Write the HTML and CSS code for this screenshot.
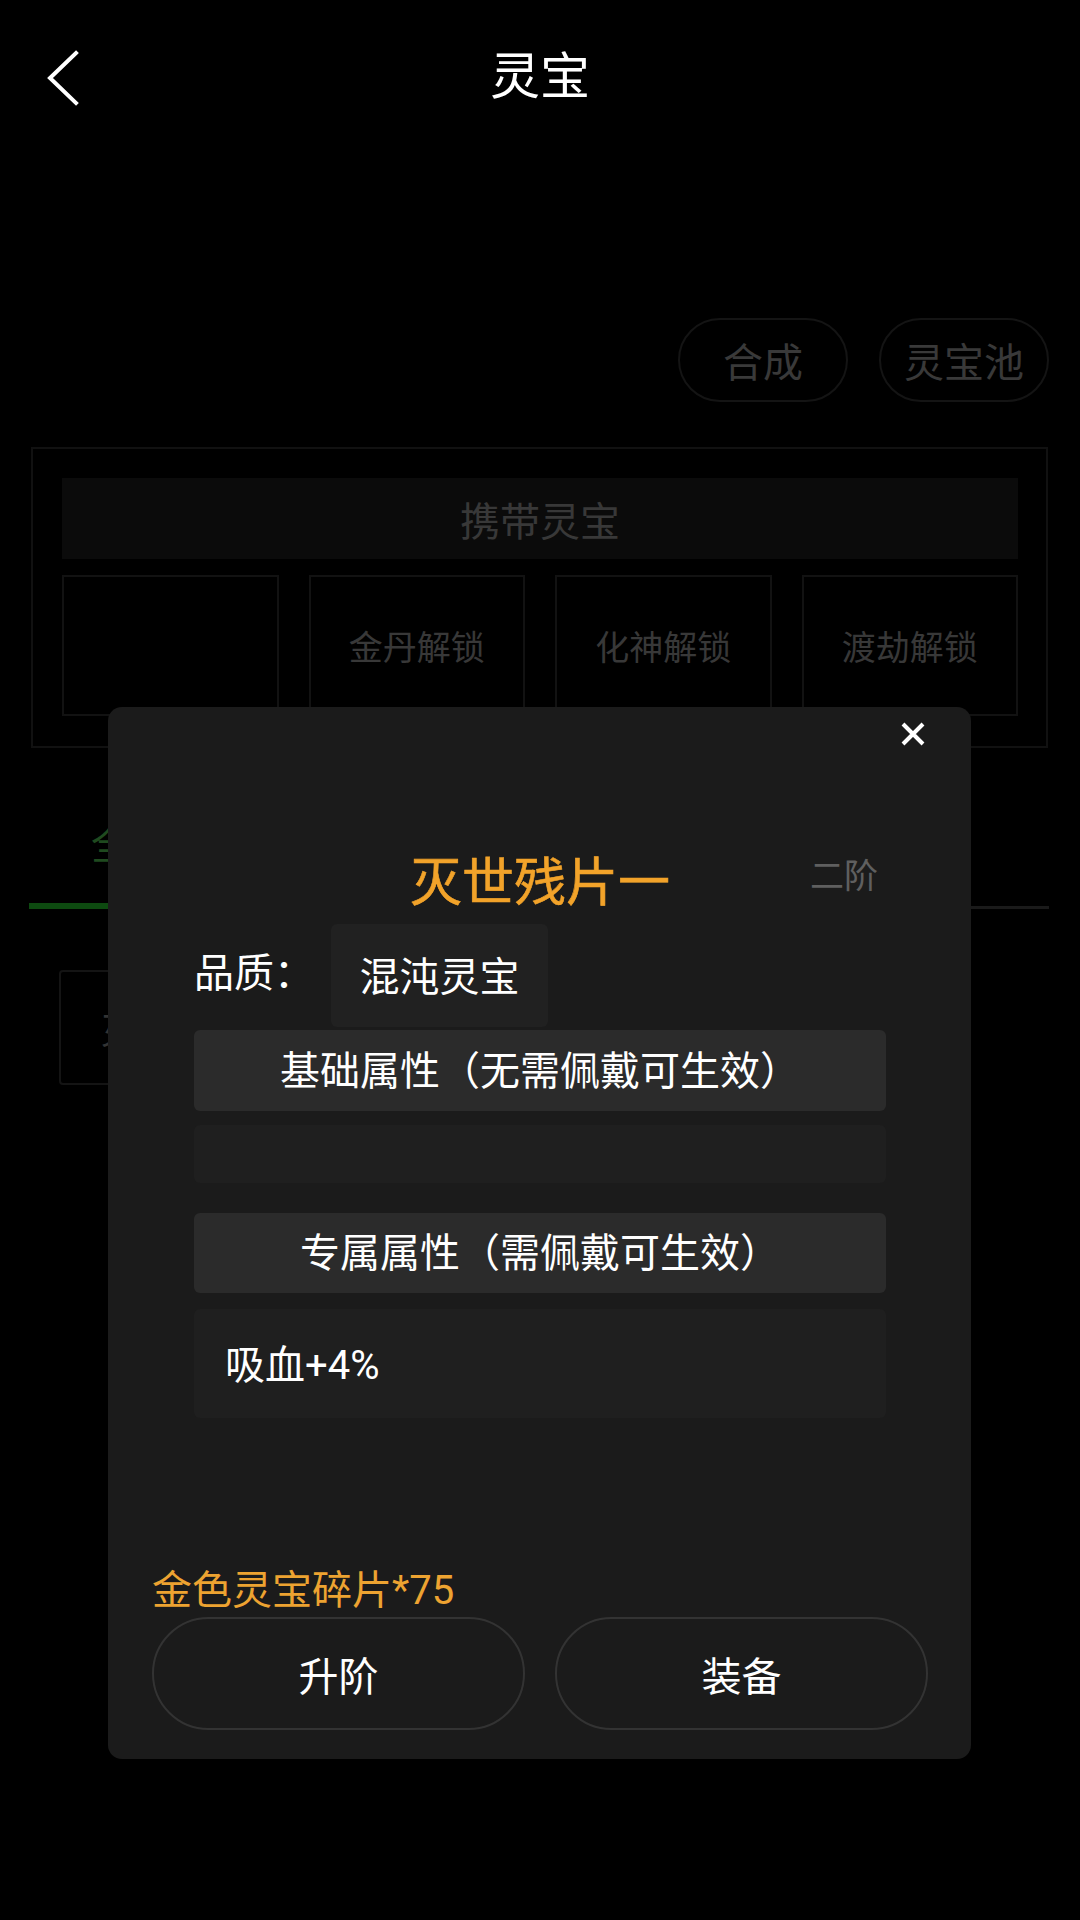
FILE: index.html
```html
<!DOCTYPE html>
<html lang="zh-CN">
<head>
<meta charset="utf-8">
<title>灵宝</title>
<link rel="stylesheet" href="styles.css">
</head>
<body>
<div class="page">
  <header class="topbar">
    <button class="back" aria-label="返回">
      <svg width="34" height="56" viewBox="0 0 34 56"><polyline points="30,3 4,28 30,53" fill="none" stroke="#ffffff" stroke-width="4" stroke-linecap="square" stroke-linejoin="miter"/></svg>
    </button>
    <h1 class="page-title">灵宝</h1>
  </header>

  <div class="actions">
    <div class="pill">合成</div>
    <div class="pill">灵宝池</div>
  </div>

  <section class="carry">
    <div class="carry-head">携带灵宝</div>
    <div class="slots">
      <div class="slot"></div>
      <div class="slot">金丹解锁</div>
      <div class="slot">化神解锁</div>
      <div class="slot">渡劫解锁</div>
    </div>
  </section>

  <nav class="tabs">
    <div class="tab active">全部</div>
  </nav>

  <div class="list">
    <div class="tile">灭世残片一</div>
  </div>

  <div class="modal">
    <button class="close" aria-label="关闭">
      <svg width="26" height="24" viewBox="0 0 26 24"><path d="M3 2 L23 22 M23 2 L3 22" stroke="#ffffff" stroke-width="4" fill="none"/></svg>
    </button>
    <div class="title-row">
      <div class="item-name">灭世残片一</div>
      <div class="grade">二阶</div>
    </div>
    <div class="attrs">
      <div class="quality">
        <span class="q-label">品质：</span>
        <span class="q-value">混沌灵宝</span>
      </div>
      <div class="sec-head">基础属性（无需佩戴可生效）</div>
      <div class="sec-body empty"></div>
      <div class="sec-head second">专属属性（需佩戴可生效）</div>
      <div class="sec-body value">吸血+4%</div>
    </div>
    <div class="footer">
      <div class="cost">金色灵宝碎片*75</div>
      <div class="btns">
        <button class="btn">升阶</button>
        <button class="btn">装备</button>
      </div>
    </div>
  </div>
</div>
</body>
</html>
```

FILE: styles.css
```css
* { box-sizing: border-box; }
html, body {
  margin: 0;
  padding: 0;
  background: #000;
}
body {
  font-family: Roboto, "Noto Sans CJK SC", "Noto Sans", sans-serif;
  color: #fff;
}
button {
  font-family: inherit;
  background: none;
  border: none;
  padding: 0;
  color: inherit;
}
.page {
  position: relative;
  width: 1080px;
  height: 1920px;
  overflow: hidden;
}

/* header */
.topbar {
  position: relative;
  height: 152px;
  display: flex;
  align-items: center;
  justify-content: center;
}
.back {
  position: absolute;
  left: 46px;
  top: 50px;
  width: 34px;
  height: 56px;
  display: flex;
}
.page-title {
  margin: 0;
  padding-top: 2px;
  font-size: 50px;
  font-weight: 400;
  line-height: 1;
  color: #fff;
}

/* actions */
.actions {
  display: flex;
  justify-content: flex-end;
  gap: 31px;
  padding-right: 31px;
  margin-top: 166px;
}
.pill {
  width: 170px;
  height: 84px;
  border: 2px solid #141414;
  border-radius: 42px;
  display: flex;
  align-items: center;
  justify-content: center;
  font-size: 40px;
  color: #393939;
}

/* carry box */
.carry {
  margin: 45px 32px 0 31px;
  border: 2px solid #111;
  padding: 29px 28px 30px 29px;
}
.carry-head {
  height: 81px;
  background: #0b0b0b;
  display: flex;
  align-items: center;
  justify-content: center;
  font-size: 40px;
  color: #383838;
}
.slots {
  margin-top: 16px;
  display: grid;
  grid-template-columns: repeat(4, 1fr);
  gap: 30px;
}
.slot {
  height: 141px;
  border: 2px solid #121212;
  display: flex;
  align-items: center;
  justify-content: center;
  font-size: 34px;
  color: #383838;
}

/* tabs */
.tabs {
  margin: 0 31px 0 29px;
  padding-top: 78px;
  display: flex;
  border-bottom: 3px solid #1a1a1a;
}
.tab {
  width: 200px;
  padding-left: 4px;
  text-align: center;
  font-size: 40px;
  line-height: 1;
  padding-bottom: 37px;
  color: #1f4a1f;
}
.tab.active {
  border-bottom: 6px solid #0d4a10;
  margin-bottom: -3px;
}

/* list */
.list {
  padding: 61px 0 0 59px;
}
.tile {
  width: 230px;
  height: 115px;
  border: 2px solid #141414;
  border-radius: 4px;
  display: flex;
  align-items: center;
  padding-left: 40px;
  font-size: 36px;
  color: #333;
}

/* modal */
.modal {
  position: absolute;
  left: 108px;
  top: 707px;
  width: 863px;
  height: 1052px;
  background: #1b1b1b;
  border-radius: 14px;
  padding: 151px 43px 29px 44px;
  display: flex;
  flex-direction: column;
}
.close {
  position: absolute;
  right: 45px;
  top: 15px;
  width: 26px;
  height: 24px;
  display: flex;
}
.title-row {
  display: grid;
  grid-template-columns: 1fr auto 1fr;
  height: 52px;
}
.item-name {
  grid-column: 2;
  font-size: 52px;
  line-height: 1;
  font-weight: 400;
  color: #f2a32a;
  -webkit-text-stroke: 0.6px #f2a32a;
}
.grade {
  grid-column: 3;
  justify-self: end;
  align-self: start;
  margin: 1px 50px 0 0;
  font-size: 34px;
  line-height: 1;
  color: #5f5f5f;
}
.attrs {
  margin: 14px 42px 0 42px;
  display: flex;
  flex-direction: column;
}
.quality {
  display: flex;
  align-items: center;
  height: 103px;
  font-size: 40px;
}
.q-label {
  width: 120px;
  margin-right: 17px;
  line-height: 1;
  padding-bottom: 4px;
}
.q-value {
  width: 217px;
  height: 103px;
  background: #212121;
  border-radius: 6px;
  display: flex;
  align-items: center;
  justify-content: center;
  padding-bottom: 4px;
}
.sec-head {
  margin-top: 3px;
  height: 81px;
  background: #2b2b2b;
  border-radius: 6px;
  display: flex;
  align-items: center;
  justify-content: center;
  font-size: 40px;
  padding-bottom: 6px;
}
.sec-head.second {
  margin-top: 30px;
  height: 80px;
}
.sec-body {
  background: #1f1f1f;
  border-radius: 6px;
}
.sec-body.empty {
  margin-top: 14px;
  height: 58px;
}
.sec-body.value {
  margin-top: 16px;
  height: 109px;
  padding-left: 31px;
  padding-bottom: 4px;
  display: flex;
  align-items: center;
  font-size: 40px;
}
.footer {
  margin-top: auto;
}
.cost {
  font-size: 40px;
  line-height: 1;
  color: #eda331;
  padding-top: 3px;
}
.btns {
  margin-top: 6px;
  display: flex;
  gap: 30px;
}
.btn {
  width: 373px;
  height: 113px;
  border: 2px solid #333;
  border-radius: 57px;
  font-size: 40px;
  color: #fff;
  display: flex;
  align-items: center;
  justify-content: center;
}
```
